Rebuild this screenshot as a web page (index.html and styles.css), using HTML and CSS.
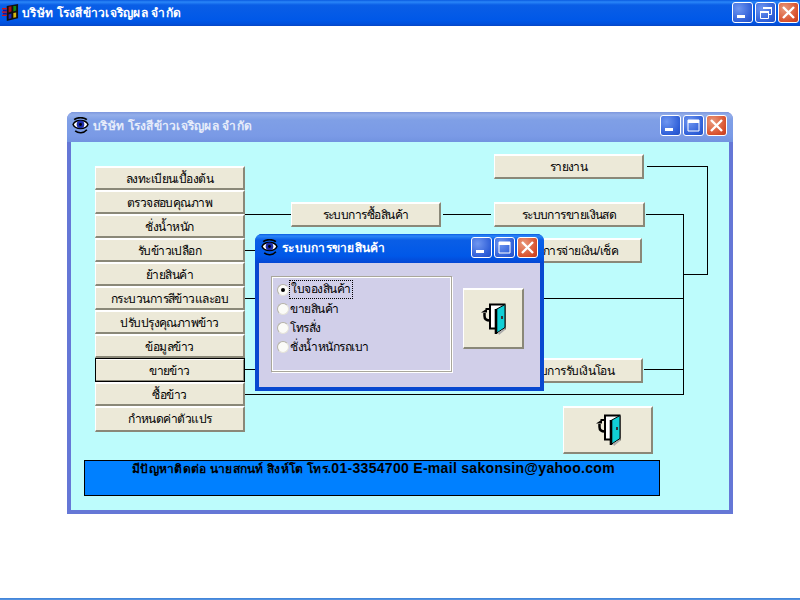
FILE: index.html
```html
<!DOCTYPE html>
<html lang="th">
<head>
<meta charset="utf-8">
<title>บริษัท โรงสีข้าวเจริญผล จำกัด</title>
<link rel="stylesheet" href="styles.css">
</head>
<body>
<svg class="defs" width="0" height="0">
  <symbol id="door" viewBox="0 0 26 32">
    <path d="M10 1.500H24.500V25.500H10Z" fill="#fff" stroke="#000" stroke-width="2"/>
    <path d="M16 6.500L25 1.500V24.500L16 30.500Z" fill="#11cfd6" stroke="#000" stroke-width="1"/>
    <path d="M16 6V31" stroke="#000" stroke-width="2.600"/>
    <path d="M21 13h2v3h-2z" fill="#333"/>
    <path d="M18 30l7-5v2l-6 5z" fill="#aaa"/>
    <path d="M4.500 10V13C4.500 16 6 17.500 10 17.500" fill="none" stroke="#000" stroke-width="2.500"/>
    <path d="M1 9.500H7V7H9V5H5.500V6.500Z" fill="#000"/>
  </symbol>
  <symbol id="eye" viewBox="0 0 16 16">
    <path d="M1 7C3 2 13 2 15 7C13 12 3 12 1 7Z" fill="#fff" stroke="#000" stroke-width="1.400"/>
    <circle cx="8" cy="7" r="3.600" fill="#1c2ba8"/>
    <circle cx="8" cy="7" r="1.400" fill="#000"/>
    <path d="M2 2.500C5 0 11 0 14 2.500M3 13C6 15.500 11 15.500 14 12" fill="none" stroke="#000" stroke-width="1.500"/>
  </symbol>
  <symbol id="flag" viewBox="0 0 18 18">
    <path d="M5 2L17 0V15L5 18Z" fill="#111"/>
    <path d="M7 3L10 2.500V8L7 9Z" fill="#b01010"/>
    <path d="M12 2L15 2V7L12 8Z" fill="#108a10"/>
    <path d="M7 11L10 10V15L7 16Z" fill="#1a28b0"/>
    <path d="M12 9.500L15 9V14L12 14.500Z" fill="#d8b810"/>
    <path d="M0 5h5M0 8.500h5M0 12h5" stroke="#d81010" stroke-width="1.500"/>
    <path d="M1 6.800h4M1 10.300h4" stroke="#1018a0" stroke-width="1.500"/>
  </symbol>
  <symbol id="g-min" viewBox="0 0 21 21"><rect x="5" y="13" width="8" height="3" fill="#fff"/></symbol>
  <symbol id="g-max" viewBox="0 0 21 21"><path d="M5 5h11v11h-11z" fill="none" stroke="#fff"/><rect x="5" y="5" width="11" height="3" fill="#fff"/></symbol>
  <symbol id="g-res" viewBox="0 0 21 21"><path d="M5.500 9.500h8v7h-8zM8.500 5.500h8v7h-3" fill="none" stroke="#fff"/><path d="M5 9h9v2h-9zM8 5h9v2h-9z" fill="#fff"/></symbol>
  <symbol id="g-x" viewBox="0 0 21 21"><path d="M5 5L16 16M16 5L5 16" stroke="#fff" stroke-width="2.400"/></symbol>
</svg>

<div class="desktop">
  <header class="appbar titlebar">
    <svg class="appicon"><use href="#flag"/></svg>
    <span class="title">บริษัท โรงสีข้าวเจริญผล จำกัด</span>
    <div class="caps caps-app">
      <span class="cap"><svg><use href="#g-min"/></svg></span>
      <span class="cap"><svg><use href="#g-res"/></svg></span>
      <span class="cap cap-close"><svg><use href="#g-x"/></svg></span>
    </div>
  </header>

  <section class="win win-main">
    <div class="titlebar bar-inactive">
      <svg class="eye"><use href="#eye"/></svg>
      <span class="title title-inactive">บริษัท โรงสีข้าวเจริญผล จำกัด</span>
      <div class="caps">
        <span class="cap"><svg><use href="#g-min"/></svg></span>
        <span class="cap"><svg><use href="#g-max"/></svg></span>
        <span class="cap cap-close"><svg><use href="#g-x"/></svg></span>
      </div>
    </div>
    <div class="canvas">
      <i class="ln h l1"></i><i class="ln h l2"></i><i class="ln h l3"></i><i class="ln h l4"></i>
      <i class="ln h l5"></i><i class="ln h l6"></i><i class="ln h l7"></i><i class="ln h l8"></i>
      <i class="ln h l9"></i><i class="ln h l10"></i>
      <i class="ln v v1"></i><i class="ln v v2"></i>

      <div class="menu">
        <button class="btn">ลงทะเบียนเบื้องต้น</button>
        <button class="btn">ตรวจสอบคุณภาพ</button>
        <button class="btn">ชั่งน้ำหนัก</button>
        <button class="btn">รับข้าวเปลือก</button>
        <button class="btn">ย้ายสินค้า</button>
        <button class="btn">กระบวนการสีข้าวและอบ</button>
        <button class="btn">ปรับปรุงคุณภาพข้าว</button>
        <button class="btn">ข้อมูลข้าว</button>
        <button class="btn btn-focus">ขายข้าว</button>
        <button class="btn">ซื้อข้าว</button>
        <button class="btn">กำหนดค่าตัวแปร</button>
      </div>

      <button class="btn node n-buy">ระบบการซื้อสินค้า</button>
      <button class="btn node n-report">รายงาน</button>
      <button class="btn node n-cash">ระบบการขายเงินสด</button>
      <button class="btn node n-check">ระบบการจ่ายเงิน/เช็ค</button>
      <button class="btn node n-transfer">ระบบการรับเงินโอน</button>
      <button class="btn node n-exit"><svg class="door"><use href="#door"/></svg></button>

      <div class="info">มีปัญหาติดต่อ นายสกนท์ สิงห์โต โทร.<span class="latin">01-3354700 E-mail sakonsin@yahoo.com</span></div>
    </div>
  </section>

  <section class="win win-dialog">
    <div class="titlebar bar-active">
      <svg class="eye"><use href="#eye"/></svg>
      <span class="title">ระบบการขายสินค้า</span>
      <div class="caps">
        <span class="cap"><svg><use href="#g-min"/></svg></span>
        <span class="cap"><svg><use href="#g-max"/></svg></span>
        <span class="cap cap-close"><svg><use href="#g-x"/></svg></span>
      </div>
    </div>
    <div class="dialog-body">
      <div class="group">
        <label class="radio"><span class="dot dot-on"></span><span class="focus">ใบจองสินค้า</span></label>
        <label class="radio"><span class="dot"></span><span>ขายสินค้า</span></label>
        <label class="radio"><span class="dot"></span><span>โทรสั่ง</span></label>
        <label class="radio"><span class="dot"></span><span>ชั่งน้ำหนักรถเบา</span></label>
      </div>
      <button class="btn btn-door"><svg class="door"><use href="#door"/></svg></button>
    </div>
  </section>

  <footer class="taskline"></footer>
</div>
</body>
</html>
```
FILE: styles.css
```css
* { box-sizing: border-box; }
html, body { margin: 0; padding: 0; background: #fff; overflow: hidden; }
body { font-family: "Liberation Sans", "Noto Sans", sans-serif; font-size: 12px; color: #000; }
.defs { position: absolute; }
.desktop { position: relative; width: 800px; height: 600px; background: #fff; }

.titlebar { display: flex; align-items: center; }
.title { color: #fff; font-weight: bold; font-size: 12px; white-space: nowrap; letter-spacing: .25px; }
.caps { display: flex; gap: 2px; margin-left: auto; }
.cap {
  width: 21px; height: 21px; border: 1px solid #fff; border-radius: 3px;
  background: radial-gradient(circle at 30% 30%, #6f96f0, #2f5fd8 70%, #2350c4);
  display: block;
}
.cap svg { display: block; width: 21px; height: 21px; margin: -1px; }
.cap-close { background: radial-gradient(circle at 30% 30%, #ea9a7c, #d8502c 70%, #c23a1c); }

.appbar {
  height: 26px; padding: 0 1px 2px 2px;
  background: linear-gradient(#0a5be0 0, #2a86f8 2px, #0a5ee6 5px, #0058e8 20px, #0150dc 24px, #0846c4 26px);
}
.appicon { width: 17px; height: 17px; margin-right: 3px; }
.caps-app { gap: 2px; }

.win { position: absolute; }
.win-main {
  left: 67px; top: 112px; width: 666px; height: 402px;
  display: flex; flex-direction: column;
  background: #6f80d9; border-radius: 7px 7px 0 0;
  border: solid #6577d6; border-width: 0 4px 4px;
}
.bar-inactive {
  height: 30px; margin: 0 -4px; padding: 0 6px 3px 5px; border-radius: 7px 7px 0 0;
  background: linear-gradient(#7d97dd 0, #93aeea 3px, #7f9fe6 8px, #7a9ae6 24px, #7193e0 30px);
}
.title-inactive { color: #e6ecfa; }
.eye { width: 17px; height: 17px; margin-right: 4px; flex: none; }
.canvas { position: relative; flex: 1; background: #bdfcfc; }

/* diagram coordinates are relative to the canvas, whose origin is page (71,142) */
.btn {
  display: flex; align-items: center; justify-content: center;
  margin: 0; padding: 0; width: 150px; height: 25px;
  font-family: inherit; font-size: 12px; letter-spacing: -.55px; color: #000; white-space: nowrap;
  background: #ece9d8;
  border: solid; border-width: 2px 2px 2px 1px;
  border-color: #fff #8a8878 #8a8878 #fff;
  border-radius: 0;
}
.menu { position: absolute; left: 24px; top: 24px; display: flex; flex-direction: column; }
.menu .btn { height: 24px; }
.menu .btn:last-child { height: 26px; padding-bottom: 2px; }
.btn-focus { outline: 1px solid #000; outline-offset: -1px; }
.node { position: absolute; }
.n-buy { left: 220px; top: 60px; }
.n-report { left: 423px; top: 12px; width: 150px; }
.n-cash { left: 423px; top: 60px; width: 151px; }
.n-check { left: 423px; top: 96px; width: 148px; }
.n-transfer { left: 423px; top: 216px; width: 149px; }
.n-exit { left: 492px; top: 264px; width: 90px; height: 48px; padding: 0; }
.door { width: 26px; height: 32px; display: block; }

.ln { position: absolute; background: #000; }
.ln.h { height: 1px; }
.ln.v { width: 1px; }
.l1 { left: 174px; width: 46px; top: 72px; }
.l2 { left: 372px; width: 48px; top: 72px; }
.l3 { left: 575px; width: 38px; top: 72px; }
.l4 { left: 576px; width: 60px; top: 24px; }
.l5 { left: 613px; width: 23px; top: 132px; }
.l6 { left: 174px; width: 439px; top: 156px; }
.l7 { left: 573px; width: 40px; top: 227px; }
.l8 { left: 174px; width: 439px; top: 252px; }
.l9 { left: 174px; width: 20px; top: 108px; }
.l10 { left: 174px; width: 20px; top: 227px; }
.v1 { left: 612px; top: 72px; height: 181px; }
.v2 { left: 636px; top: 24px; height: 109px; }

.info {
  position: absolute; left: 13px; top: 318px; width: 576px; height: 36px;
  background: #0080ff; border: 1px solid #000;
  padding-left: 47px; font-weight: bold; font-size: 12px; letter-spacing: .25px; line-height: 14px; white-space: nowrap;
}
.latin { font-size: 14px; letter-spacing: .3px; }

.win-dialog {
  left: 255px; top: 234px; width: 289px; height: 157px;
  display: flex; flex-direction: column;
  background: #0a4fd8; border-radius: 7px 7px 0 0;
  border: solid #0848d0; border-width: 0 4px 4px;
}
.bar-active {
  height: 29px; margin: 0 -4px; padding: 0 6px 2px 6px; border-radius: 7px 7px 0 0;
  background: linear-gradient(#0a5be0 0, #2a86f8 2px, #0a5ee6 6px, #0058e8 22px, #0446d4 29px);
}
.dialog-body {
  flex: 1; background: #d1cfe9; display: flex; align-items: flex-start;
  padding: 13px 16px 0 12px; gap: 11px;
}
.group {
  width: 181px; height: 96px; padding: 3px 0 0 5px;
  border: 1px solid #a9a79b; outline: 1px solid #fff; outline-offset: -2px;
  box-shadow: 1px 1px 0 #fff;
  display: flex; flex-direction: column;
}
.radio { display: flex; align-items: center; height: 19px; font-size: 12px; letter-spacing: -.5px; white-space: nowrap; }
.radio .focus { outline: 1px dotted #000; outline-offset: 0; padding: 0 1px; line-height: 17px; }
.dot {
  width: 12px; height: 12px; border-radius: 50%; flex: none; margin-right: 1px;
  background: #fbfbf8;
  border: 1px solid #b5b3a6; border-right-color: #e4e2d8; border-bottom-color: #e4e2d8;
  position: relative;
}
.dot-on::after { content: ""; position: absolute; left: 3px; top: 3px; width: 4px; height: 4px; border-radius: 50%; background: #000; }
.btn-door { width: 61px; height: 61px; padding: 0; margin-top: 12px; flex: none; }

.taskline { position: absolute; left: 0; right: 0; bottom: 0; height: 2px; background: linear-gradient(#3c80d8, #5a96e0); }
```
